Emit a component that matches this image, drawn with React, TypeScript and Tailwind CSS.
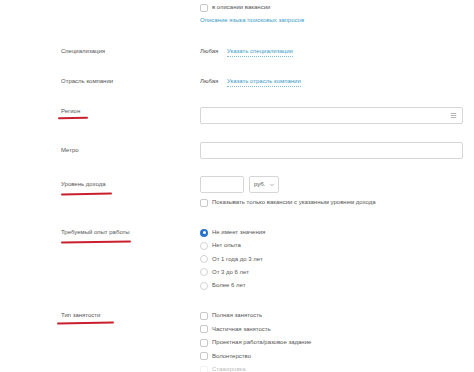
import { ChevronDown, Menu } from "lucide-react";

function Box({ faded }: { faded?: boolean }) {
  return (
    <span
      className={`inline-block h-[8px] w-[8px] shrink-0 rounded-[2px] border ${
        faded ? "border-[#e6e6e6]" : "border-[#c8c8c8]"
      } bg-white`}
    />
  );
}

function Radio({ on }: { on?: boolean }) {
  return on ? (
    <span className="flex h-[8px] w-[8px] shrink-0 items-center justify-center rounded-full bg-[#2a74c9]">
      <span className="h-[3px] w-[3px] rounded-full bg-white" />
    </span>
  ) : (
    <span className="inline-block h-[8px] w-[8px] shrink-0 rounded-full border border-[#d2d2d2] bg-white" />
  );
}

function Mark({ w, ml = 0, mt = 3 }: { w: number; ml?: number; mt?: number }) {
  return (
    <div
      className="h-[2px] rounded-full bg-[#c8202f] -rotate-[1deg]"
      style={{ width: w, marginLeft: ml, marginTop: mt }}
    />
  );
}

function Row({
  label,
  mark,
  labelPt = 0,
  mt,
  children,
}: {
  label: string;
  mark?: React.ReactNode;
  labelPt?: number;
  mt: string;
  children: React.ReactNode;
}) {
  return (
    <div className={`flex ${mt}`}>
      <div className="w-[139px] shrink-0" style={{ paddingTop: labelPt }}>
        <div className="leading-[9px]">{label}</div>
        {mark}
      </div>
      <div className="flex-1">{children}</div>
    </div>
  );
}

const experience = [
  "Не имеет значения",
  "Нет опыта",
  "От 1 года до 3 лет",
  "От 3 до 6 лет",
  "Более 6 лет",
];

const employment = [
  "Полная занятость",
  "Частичная занятость",
  "Проектная работа/разовое задание",
  "Волонтерство",
  "Стажировка",
];

export default function App() {
  return (
    <div className="h-[372px] w-[474px] overflow-hidden bg-white pl-[61px] pr-[11px] font-['Liberation_Sans',Arial,sans-serif] text-[6px] text-[#555]">
      <div className="flex">
        <div className="w-[139px] shrink-0" />
        <div className="flex-1 pt-[3px]">
          <label className="flex h-[9px] items-center gap-[4px]">
            <Box />
            <span>в описании вакансии</span>
          </label>
          <a className="mt-[4px] block leading-[9px] text-[#3c9cc6]">
            Описание языка поисковых запросов
          </a>
        </div>
      </div>

      <Row label="Специализация" mt="mt-[22px]">
        <div className="flex leading-[9px]">
          <span className="w-[27px] text-[#555]">Любая</span>
          <a className="border-b border-dotted border-[#7fbcd8] text-[#3c9cc6]">
            Указать специализации
          </a>
        </div>
      </Row>

      <Row label="Отрасль компании" mt="mt-[20px]">
        <div className="flex leading-[9px]">
          <span className="w-[27px] text-[#555]">Любая</span>
          <a className="border-b border-dotted border-[#7fbcd8] text-[#3c9cc6]">
            Указать отрасль компании
          </a>
        </div>
      </Row>

      <Row
        label="Регион"
        mt="mt-[20px]"
        labelPt={0}
        mark={<Mark w={30} ml={-3} mt={1} />}
      >
        <div className="flex h-[17px] items-center justify-end rounded-[2px] border border-[#d6d6d6] pr-[5px]">
          <Menu className="h-[7px] w-[7px] text-[#999]" strokeWidth={2.5} />
        </div>
      </Row>

      <Row label="Метро" mt="mt-[18px]" labelPt={4}>
        <div className="h-[17px] rounded-[2px] border border-[#d6d6d6]" />
      </Row>

      <Row
        label="Уровень дохода"
        mt="mt-[17px]"
        labelPt={4}
        mark={<Mark w={51} mt={4} />}
      >
        <div className="flex gap-[5px]">
          <div className="h-[17px] w-[44px] rounded-[2px] border border-[#d6d6d6]" />
          <div className="flex h-[17px] w-[30px] items-center justify-between rounded-[2px] border border-[#d6d6d6] pl-[4px] pr-[3px]">
            <span>руб.</span>
            <ChevronDown className="h-[6px] w-[6px] text-[#888]" strokeWidth={2.5} />
          </div>
        </div>
        <label className="mt-[5px] flex h-[9px] items-center gap-[4px]">
          <Box />
          <span>Показывать только вакансии с указанным уровнем дохода</span>
        </label>
      </Row>

      <Row
        label="Требуемый опыт работы"
        mt="mt-[21px]"
        mark={<Mark w={70} mt={4} />}
      >
        <div className="flex flex-col gap-[4.3px]">
          {experience.map((t, i) => (
            <label key={t} className="flex h-[9px] items-center gap-[4px]">
              <Radio on={i === 0} />
              <span>{t}</span>
            </label>
          ))}
        </div>
      </Row>

      <Row
        label="Тип занятости"
        mt="mt-[21px]"
        mark={<Mark w={57} ml={-4} mt={2} />}
      >
        <div className="flex flex-col gap-[4.5px]">
          {employment.map((t, i) => (
            <label
              key={t}
              className={`flex h-[9px] items-center gap-[4px] ${
                i === 4 ? "opacity-40" : ""
              }`}
            >
              <Box faded={i === 4} />
              <span>{t}</span>
            </label>
          ))}
        </div>
      </Row>
    </div>
  );
}
